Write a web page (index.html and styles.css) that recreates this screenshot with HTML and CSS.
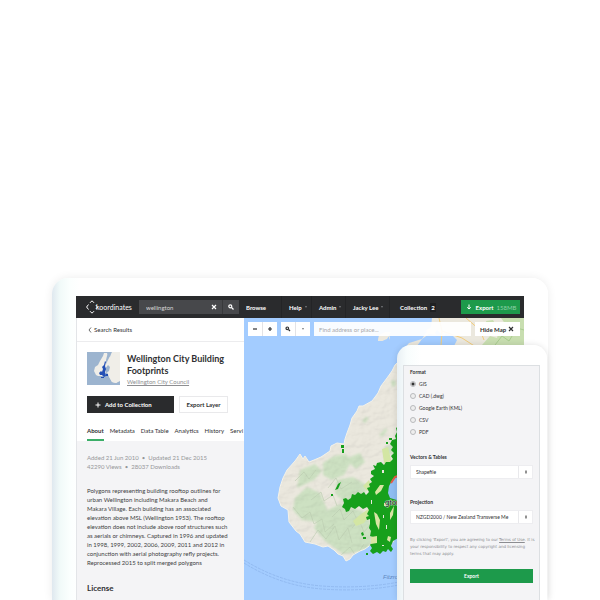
FILE: index.html
```html
<!DOCTYPE html>
<html lang="en">
<head>
<meta charset="utf-8">
<title>Wellington City Building Footprints</title>
<link rel="stylesheet" href="styles.css">
</head>
<body>
<main class="tablet">
  <div class="screen">
    <header class="nav">
      <a class="logo" href="#">
        <svg class="logo-mark" viewBox="0 0 12 14" aria-hidden="true"><path d="M2.500 4.500L.6 7l1.900 2.500M4 2.800L6 .8l2 2M4 11.200l2 2 2-2M9.800 5L11.500 7l-1.700 2"/></svg>
        <span>koordinates</span>
      </a>
      <form class="search">
        <input type="text" value="wellington" aria-label="Search data">
        <button type="button" aria-label="Clear"><svg viewBox="0 0 8 8"><path d="M2 2l4 4M6 2L2 6"/></svg></button>
        <button type="button" class="go" aria-label="Search"><svg viewBox="0 0 8 8"><circle cx="3.300" cy="3.300" r="1.500"/><path d="M4.500 4.500l2 2"/></svg></button>
      </form>
      <nav class="links">
        <a class="browse" href="#">Browse</a>
        <a class="help" href="#">Help <i class="caret"></i></a>
        <a class="admin" href="#">Admin <i class="caret"></i></a>
        <a class="user" href="#">Jacky Lee <i class="caret"></i></a>
        <a class="coll" href="#">Collection <span class="count">2</span></a>
      </nav>
      <button type="button" class="nav-export"><svg viewBox="0 0 8 8"><path d="M4 1.500v4.500M2.200 4.300L4 6l1.800-1.700"/></svg>Export <span>158MB</span></button>
    </header>
    <div class="body">
      <aside class="side">
        <a class="back" href="#"><svg viewBox="0 0 4 8"><path d="M3 1.500L1 4l2 2.500"/></svg>Search Results</a>
        <section class="head">
          <div class="title-row">
            <svg class="thumb" viewBox="0 0 33 33" aria-hidden="true">
              <rect width="33" height="33" fill="#9cb4cf"/>
              <path fill="#f0eee8" d="M17 1l3 0 1 2 2 2 1-5h9v28l-4 3-4-1-3-5-2-5-2 2-3 2-4 0-2-1-2-4 1-4 3-2 2-4 3-5z"/>
              <path fill="#9cb4cf" d="M21 0h4l-4 8-2 4 0-4zM18 17l3-4 2 2-1 4-3 2z"/>
              <path fill="#f0eee8" d="M22 9l11-9v29l-4 2-4-1-3-6 1-4 1-5-3-3z"/>
              <path fill="#2450b5" d="M18 9l1 1-1 4 1 3-1 3 1 4-2 1-2-2-2 0-1-2 2-2 1 1 1-3-1-2 2-2zM19 22h2v2h-2zM14 25h3v1h-3z"/>
            </svg>
            <div>
              <h1>Wellington City Building Footprints</h1>
              <a class="org" href="#">Wellington City Council</a>
            </div>
          </div>
          <div class="actions">
            <button type="button" class="add"><svg viewBox="0 0 8 8"><path d="M4 1.500v5M1.500 4h5"/></svg>Add to Collection</button>
            <button type="button" class="layer">Export Layer</button>
          </div>
          <nav class="tabs">
            <a class="on" href="#">About</a><a href="#">Metadata</a><a href="#">Data Table</a><a href="#">Analytics</a><a href="#">History</a><a href="#">Servi</a>
          </nav>
        </section>
        <section class="about">
          <p class="meta">Added 21 Jun 2010 &nbsp;•&nbsp; Updated 21 Dec 2015<br>42290 Views &nbsp;•&nbsp; 28037 Downloads</p>
          <p class="desc">Polygons representing building rooftop outlines for<br>urban Wellington including Makara Beach and<br>Makara Village. Each building has an associated<br>elevation above MSL (Wellington 1953). The rooftop<br>elevation does not include above roof structures such<br>as aerials or chimneys. Captured in 1996 and updated<br>in 1998, 1999, 2002, 2006, 2009, 2011 and 2012 in<br>conjunction with aerial photography refly projects.<br>Reprocessed 2015 to split merged polygons</p>
          <h2>License</h2>
        </section>
      </aside>
      <section class="map">
        <svg class="terrain" viewBox="244 318 280 282" preserveAspectRatio="xMinYMin slice" role="img" aria-label="Map of Wellington">
          <defs>
            <filter id="soft"><feGaussianBlur stdDeviation="1.300"/></filter>
            <clipPath id="isle"><path d="M400 360l-5 5-3 6-5 7-6 8-3 7-6 8-9 5-4 0-2 5-5 7-2 7-3 8-2 6-1 5-7-1-6 3-1 5-9 6-7 3-5 2-4-6-2 3-3-5-5 7-8 9-4 8-3 9-2 11 3 8 7 4 1 12 7 9 4 3 5 8 10 2 8 3 5-1 6 4 4 4 5 2 3 5 4-2 3-4 7-4 5-2 4-3h25z"/></clipPath>
            <filter id="relief" x="0" y="0" width="100%" height="100%">
              <feTurbulence type="fractalNoise" baseFrequency=".09 .13" numOctaves="3" seed="8" result="n"/>
              <feDiffuseLighting in="n" surfaceScale="3" lighting-color="#fff"><feDistantLight azimuth="225" elevation="60"/></feDiffuseLighting>
            </filter>
          </defs>
          <rect x="244" y="318" width="280" height="282" fill="#a3ccff"/>
          <path fill="#ebe8de" d="M378 341l1-5 5-2 6 0-3 5-5 2zM388 335l3-8 8-5 15-2 17-2 93 0v70H440l-28-36-8-3 5-6 13-4 5-8-12 2-16 10-7 2z"/>
          <path fill="#a3ccff" d="M385 318h47l-1 9-9 6-11 5-12 8-9 4 0-12z"/>
          <path fill="#ebe8de" d="M378 341l1-6 6-3 6 0-4 6-5 3z"/>
          <path fill="#a3ccff" d="M417 346l5-7 7-5 8 1 4 3 5-4 7 2 4 4-3 6zM437 330l8 8-4 3-6-8z"/>
          <path fill="#c8deb0" d="M501 318h23v40h-33l-9-13 8-9 7 2 2-7 7-6zM486 321l7-1 5 9-8 6z"/>
          <path fill="none" stroke="#a8cc8f" d="M495 345l7-9 7 5 8-13 7 2M507 322l9 8"/>
          <path fill="none" stroke="#f3cc7b" d="M439 318l3 13-1 15M442 331l20 7 14 9M466 318l14 12 4 10"/>
          <g clip-path="url(#isle)">
            <rect x="270" y="355" width="130" height="220" fill="#ebe8de"/>
            <g fill="#cde1c2" filter="url(#soft)">
              <path d="M300 470l15-6 7 7-8 9-17 8zM323 463l11-7 12-2 5 8-7 13-12 5-9-5zM337 480l16-3 15 9-6 13-18 3-9-9zM295 498l12-11 13 6 7 16-10 13-15-2-9-10zM321 513l19-9 22 7 13 17-6 22-26 4-18-13-11-13zM345 459l15-6 5 9-9 7zM385 448l8-4 7 4-5 6-9 1zM362 421l4-4 3 1-4 5zM379 435l7-7 1 3-5 6zM391 381l4-1 1 5-4 2zM380 553l8-8 7 4-3 11-10-1z"/>
            </g>
            <g fill="none" stroke="#bccdb0" opacity=".6">
              <path d="M293 507l9 11 8-6 4 12 8-5 3 13 9-8M311 500l10-8 3 9 9-6 4 11M310 542l8-12 8 9 9-13 4 14 9-12 4 15M332 517l8-8 4 11 9-9 6 13M340 556l10-9 6 9 8-12M295 481l9-9 5 7 7-9M328 488l8-10 5 11 11-7M352 528l7-8 5 12 6-7"/>
            </g>
            <rect x="270" y="355" width="130" height="220" filter="url(#relief)" opacity=".14" style="mix-blend-mode:multiply"/>
          </g>
          <path fill="none" stroke="#f5f2e8" d="M400 360l-5 5-3 6-5 7-6 8-3 7-6 8-9 5-4 0-2 5-5 7-2 7-3 8-2 6-1 5-7-1-6 3-1 5-9 6-7 3-5 2-4-6-2 3-3-5-5 7-8 9-4 8-3 9-2 11 3 8 7 4 1 12 7 9 4 3 5 8 10 2 8 3 5-1 6 4 4 4 5 2 3 5 4-2 3-4 7-4 5-2 4-3"/>
          <path fill="#a3ccff" d="M400 539l-8 4-1 9-8 2-12 1v6h29z"/>
          <path fill="#d3e6a3" d="M382 449l6-2 4 17-2 5-6-6zM353 521l8-7 9-6 5-5 5 3-5 8-6 2-5 7-8 3zM363 486l6-6 2 5-4 6z"/>
          <path fill="#17a01c" d="M400 425L396 428 397 432 395 436 396 439 392 440 390 444 393 447 391 450 394 453 391 456 393 459 390 462 386 462 384 465 381 462 377 463 376 466 373 465 375 469 371 471 371 474 374 476 370 479 372 482 369 484 370 487 367 488 369 492 366 495 364 492 361 494 358 492 355 495 352 494 351 498 348 500 346 498 343 499 344 503 342 507 345 509 346 512 349 511 351 507 355 509 359 506 363 509 367 507 369 510 367 514 369 516 366 517 367 520 370 519 370 524 369 528 371 531 370 536 373 537 372 542 370 545 372 548 370 551 373 554 377 552 380 554 383 551 386 552 388 549 391 552 393 549 391 546 393 541 400 537z"/>
          <path fill="#17a01c" d="M341 445h3v3h-3zM342 449h2v4h-2zM338 484l3-2-3 7-3 1zM361 533l2-1 1 3-2 1zM363 537h3v2h-3zM389 438h3v2h-3zM366 553h2v2h-2zM331 494h2v2h-2zM386 442h2v2h-2z"/>
          <path fill="#d8e5a4" d="M375 492l5-7 4 0-3 6-5 4zM374 512l3 2 3 6-1 10-3-6zM390 513l4-7-1 9-3 5zM371 537l6-1 0 7-6 1zM388 536l3 1-1 5-3-2zM384 503h3l-1 3h-2z"/>
          <path fill="#ebe8de" d="M382 470h2v3h-2zM371 500h1v4h-1zM382 545h2v1h-2zM386 525h1v4h-1zM383 515h1v3h-1z"/>
          <path fill="#8ebdf2" d="M400 476L393 479 389 486 388 493 390 498 400 501z"/>
          <path fill="none" stroke="#e75b4a" stroke-width="2" d="M400 475l-5 2-4 6"/>
          <path fill="none" stroke="#87afe7" stroke-width=".8" stroke-dasharray="3 1" opacity=".8" d="M244 560q37 23 78 26 40 3 77-4M244 563q37 23 78 26 40 3 77-4"/>
          <text class="place" x="385" y="505">gton</text>
          <text class="water" x="383" y="579">Fitzroy</text>
        </svg>
        <div class="tools">
          <div class="group"><button type="button" aria-label="Zoom out"><svg viewBox="0 0 8 8"><path d="M2 4h4"/></svg></button><button type="button" aria-label="Zoom in"><svg viewBox="0 0 8 8"><path d="M2 4h4M4 2v4"/></svg></button></div>
          <div class="group"><button type="button" aria-label="Find"><svg viewBox="0 0 8 8"><circle cx="3.300" cy="3.300" r="1.300"/><path d="M4.500 4.500l1.500 1.500"/></svg></button><button type="button" aria-label="Options"><i class="caret"></i></button></div>
          <input class="address" type="text" placeholder="Find address or place..." aria-label="Find address or place">
          <button type="button" class="hide">Hide Map <svg viewBox="0 0 8 8"><path d="M2 2l4 4M6 2L2 6"/></svg></button>
        </div>
      </section>
    </div>
  </div>
  <form class="phone">
    <div class="panel">
      <fieldset>
        <legend>Format</legend>
        <label><input type="radio" name="format" checked>GIS</label>
        <label><input type="radio" name="format">CAD (.dwg)</label>
        <label><input type="radio" name="format">Google Earth (KML)</label>
        <label><input type="radio" name="format">CSV</label>
        <label><input type="radio" name="format">PDF</label>
      </fieldset>
      <label class="caption" for="vectors">Vectors &amp; Tables</label>
      <div class="pick"><select id="vectors"><option>Shapefile</option></select><svg viewBox="0 0 6 8" aria-hidden="true"><path d="M3 2L4 3.700H2zM3 6L2 4.300h2z"/></svg></div>
      <label class="caption" for="projection">Projection</label>
      <div class="pick"><select id="projection"><option>NZGD2000 / New Zealand Transverse Me</option></select><svg viewBox="0 0 6 8" aria-hidden="true"><path d="M3 2L4 3.700H2zM3 6L2 4.300h2z"/></svg></div>
      <p class="terms">By clicking 'Export', you are agreeing to our <a href="#">Terms of Use</a>. It is<br>your responsibility to respect any copyright and licensing<br>terms that may apply.</p>
      <button type="submit" class="export">Export</button>
    </div>
  </form>
</main>
</body>
</html>
```
FILE: styles.css
```css
* { box-sizing: border-box; }
body {
  margin: 0;
  height: 100vh;
  overflow: hidden;
  display: flex;
  flex-direction: column;
  background: #fff;
  color: #2f3032;
  font: 6px/9px Lato, "Liberation Sans", sans-serif;
}
a { color: inherit; text-decoration: none; }
button, input, select { font: inherit; color: inherit; border: 0; border-radius: 0; margin: 0; padding: 0; }
h1, h2, p { margin: 0; }
svg { display: block; flex: none; fill: none; stroke: currentColor; }

.tablet {
  position: relative;
  flex: 1;
  min-height: 0;
  display: flex;
  margin: 278px 52px 0;
  padding: 18px 24px 0;
  border-radius: 16px 16px 0 0;
  background: linear-gradient(to right, #dfe8ef 0, #f1faf9 8px, #fbfffe 18px, #fff 28px);
  box-shadow: 0 0 10px rgba(0, 0, 0, .08);
}
.screen { flex: 1; min-width: 0; display: flex; flex-direction: column; overflow: hidden; }

.nav {
  display: flex;
  align-items: center;
  height: 22px;
  flex: none;
  padding: 0 4px 0 10px;
  background: #2a2b2d;
  color: #fff;
}
.logo { display: flex; align-items: center; width: 53px; font-size: 7px; }
.logo-mark { width: 12px; height: 14px; stroke-width: 1; }
.logo span { margin-left: -2px; }
.search { display: flex; width: 100px; height: 14px; background: #47484b; }
.search input { flex: 1; min-width: 0; padding-left: 7px; background: none; color: #d6d6d6; }
.search button { display: grid; place-items: center; width: 16px; background: none; color: #fff; }
.search .go { width: 17px; border-left: 1px solid #38393b; }
.search svg { width: 8px; height: 8px; stroke-width: 1.200px; }
.links { display: flex; flex: 1; align-self: stretch; font-weight: 700; }
.links a { display: flex; align-items: center; padding-left: 7px; border-right: 1px solid #232426; white-space: nowrap; }
.links .browse { width: 43px; }
.links .help { width: 30px; }
.links .admin { width: 34px; }
.links .user { width: 44px; }
.links .coll { border: 0; padding-left: 10px; }
.caret { margin-left: 3px; border: 1px solid transparent; border-top: 2px solid #77797c; border-bottom: 0; }
.count { margin-left: 3px; padding: 0 1px; background: #1f2022; }
.nav-export {
  display: flex;
  align-items: center;
  justify-content: center;
  width: 59px;
  height: 14px;
  background: #1d9a4b;
  font-weight: 700;
}
.nav-export svg { width: 8px; height: 8px; margin-right: 3px; }
.nav-export span { margin-left: 3px; font-weight: 400; color: #8fd0a7; }

.body { display: flex; flex: 1; min-height: 0; }
.side { display: flex; flex-direction: column; width: 168px; flex: none; border-left: 1px solid #e3e5e8; background: #fff; overflow: hidden; }
.back { display: flex; align-items: center; gap: 2px; height: 24px; flex: none; padding-left: 11px; border-bottom: 1px solid #ececee; }
.back svg { width: 4px; height: 8px; stroke-width: .7px; }
.head { padding: 10px 0 0 10px; }
.title-row { display: flex; gap: 7px; }
.thumb { width: 33px; height: 33px; stroke: none; }
h1 { padding-top: 1px; font-size: 9px; line-height: 12px; font-weight: 700; }
.org { display: block; color: #8d8e91; text-decoration: underline; text-underline-offset: 1px; }
.actions { display: flex; gap: 5px; margin-top: 10px; }
.actions button { height: 17px; font-weight: 700; }
.add { display: flex; align-items: center; width: 87px; padding-left: 7px; background: #2a2b2d; color: #fff; }
.add svg { width: 8px; height: 8px; margin-right: 3px; }
.actions .layer { width: 49px; border: 1px solid #e9e9eb; background: #fff; }
.tabs { display: flex; gap: 6px; margin-top: 13px; white-space: nowrap; }
.tabs a { height: 15px; }
.tabs .on { border-bottom: 2px solid #3bae68; font-weight: 700; }
.about { flex: 1; padding: 12px 0 0 10px; background: #f4f4f6; white-space: nowrap; }
.meta { color: #96979a; }
.desc { margin-top: 15px; color: #3e3f42; }
h2 { margin-top: 16px; font-size: 8px; line-height: 10px; }

.map { position: relative; flex: 1; min-width: 0; overflow: hidden; background: #a3ccff; }
.terrain { width: 100%; height: 100%; stroke: none; }
.place { font: 8px "Liberation Sans", sans-serif; fill: #222; stroke: #fff; stroke-width: 1px; stroke-opacity: .7; paint-order: stroke; }
.water { font: italic 6px "Liberation Sans", sans-serif; fill: #6188c0; }
.tools { position: absolute; top: 4px; left: 4px; right: 4px; display: flex; gap: 4px; height: 14px; }
.group { display: flex; background: #fff; }
.group button { display: grid; place-items: center; width: 14px; background: none; }
.group button + button { width: 15px; border-left: 1px solid #e3e3e6; }
.group svg, .hide svg { width: 8px; height: 8px; stroke-width: 1.200px; }
.group .caret { margin: 0; }
.address { flex: 1; min-width: 0; padding: 0 5px; background: rgba(255, 255, 255, .93); }
.address::placeholder { color: #a7a8ab; opacity: 1; }
.hide { display: flex; align-items: center; justify-content: center; gap: 1px; width: 45px; background: #fff; font-weight: 700; white-space: nowrap; }

.phone {
  position: absolute;
  top: 67px;
  right: 1px;
  bottom: 0;
  width: 150px;
  padding: 20px 7px 0 6px;
  border-radius: 14px 14px 0 0;
  background: linear-gradient(to right, #e9f0f4 0, #f8fdfd 10px, #fff 24px);
  box-shadow: 0 0 6px rgba(0, 0, 0, .12);
}
.panel { height: 100%; padding: 2px 6px 0; border: 1px solid #dcdfe2; border-bottom: 0; background: #f4f4f6; font-size: 5px; line-height: 8px; }
fieldset { margin: 0; padding: 0; border: 0; }
legend { padding: 0; margin-bottom: 2px; font-weight: 700; }
fieldset label { display: flex; align-items: center; gap: 3px; height: 12px; }
input[type="radio"] { appearance: none; width: 6px; height: 6px; border: 1px solid #b9babd; border-radius: 50%; background: #eee; }
input[type="radio"]:checked { background: radial-gradient(#333 0 1px, #e4e4e6 2px); }
.caption { display: block; margin-top: 15px; font-weight: 700; }
.pick { position: relative; height: 14px; margin-top: 4px; background: #fff; }
.pick select { appearance: none; width: 100%; height: 14px; padding: 0 15px 0 5px; border: 1px solid #ededf0; background: linear-gradient(#e9e9ec, #e9e9ec) right 13px top / 1px 100% no-repeat #fff; }
.pick svg { position: absolute; top: 3px; right: 4px; width: 6px; height: 8px; fill: #444; stroke: none; pointer-events: none; }
.pick + .caption { margin-top: 19px; }
.terms { margin-top: 12px; font: 4px/7px "DejaVu Sans", sans-serif; color: #8b8c90; white-space: nowrap; }
.terms a { text-decoration: underline; }
.export { display: block; width: 100%; height: 14px; margin-top: 12px; background: #1d9a4b; color: #fff; font-weight: 700; }
```
